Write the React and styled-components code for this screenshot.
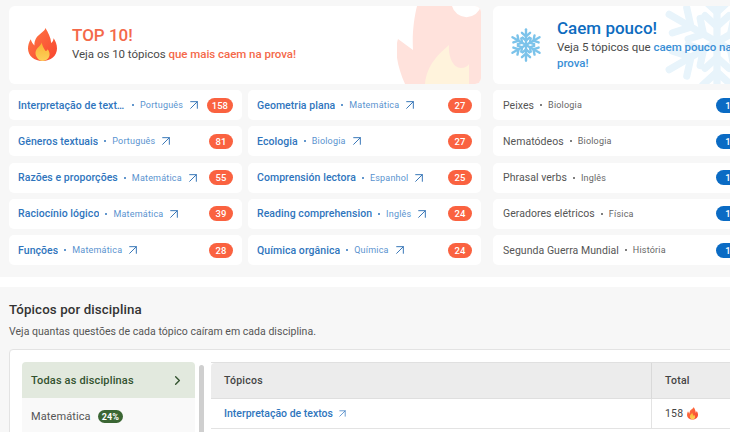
import React from "react";
import styled, { createGlobalStyle } from "styled-components";
import { ArrowUpRight, ChevronRight } from "lucide-react";

const Global = createGlobalStyle`
  html, body { margin: 0; padding: 0; background: #f7f7f7; }
  body { font-family: Roboto, "Liberation Sans", sans-serif; }
  * { box-sizing: border-box; }
`;

const Page = styled.div`
  width: 730px; height: 432px; overflow: hidden; background: #f7f7f7;
`;
const Highlights = styled.section`
  display: flex; gap: 12px; padding: 6px 0 0 9px; height: 277px; width: 790px;
`;
const Column = styled.div`
  flex: none; width: ${p => p.$w}px; display: flex; flex-direction: column;
`;
const Hero = styled.div`
  position: relative; height: 78px; background: #fff; border-radius: 6px; overflow: hidden;
  display: flex; align-items: center; gap: ${p => p.$gap}px; padding-left: ${p => p.$pad}px;
  margin-bottom: 6px; flex: none;
`;
const HeroText = styled.div`
  position: relative; display: flex; flex-direction: column; width: ${p => p.$w || "auto"};
  padding-bottom: ${p => p.$lift}px;
`;
const HeroTitle = styled.div`
  font-size: 17px; font-weight: 500; line-height: 21px; color: ${p => p.$c};
`;
const HeroSub = styled.div`
  font-size: 11.5px; line-height: 16px; color: #4a4a4a; letter-spacing: -.03px;
  em { font-style: normal; font-weight: 500; color: ${p => p.$c}; }
`;
const Watermark = styled.svg`
  position: absolute; right: ${p => p.$r}px; top: ${p => p.$t}px;
`;
const Rows = styled.div`
  display: grid; grid-template-columns: ${p => p.$cols}; column-gap: 6px; row-gap: 6.3px;
`;
const Row = styled.div`
  height: 30px; background: #fff; border-radius: 5px; display: flex; align-items: center;
  padding: 0 9px 0 ${p => p.$pad || 9}px;
`;
const Topic = styled.span`
  flex: none; font-size: 10.5px; letter-spacing: ${p => p.$muted ? ".05px" : ".06px"}; font-weight: ${p => p.$muted ? 400 : 500};
  color: ${p => p.$muted ? "#555" : "#2f75bd"}; white-space: nowrap; overflow: hidden; text-overflow: ellipsis;
  ${p => p.$w ? `width: ${p.$w}px;` : ""}
`;
const Dot = styled.span`
  width: 2px; height: 2px; border-radius: 50%; margin: 0 6px; flex: none;
  background: ${p => p.$muted ? "#555" : "#2f75bd"};
`;
const Subject = styled.span`
  font-size: 9px; letter-spacing: .2px; white-space: nowrap; color: ${p => p.$muted ? "#666" : "#5a93cf"};
`;
const RowArrow = styled(ArrowUpRight)`
  flex: none; margin-left: 3px; color: #3a78b8;
`;
const Badge = styled.span`
  margin-left: auto; flex: none; height: 15px; min-width: 24px; padding: 0 5px; border-radius: 8px;
  background: ${p => p.$c}; color: #fff; font-size: 9.5px; font-weight: 500;
  display: flex; align-items: center; justify-content: center;
`;
const Band = styled.div`
  height: 10px; background: #fff;
`;
const Disciplines = styled.section`
  padding: 14px 0 0 9px;
`;
const SectionTitle = styled.h2`
  margin: 0; font-size: 13.3px; font-weight: 500; line-height: 18px; color: #333; letter-spacing: .12px;
`;
const SectionSub = styled.p`
  margin: 6px 0 0; font-size: 10.5px; line-height: 14px; color: #555; letter-spacing: .03px;
`;
const Panel = styled.div`
  margin-top: 10px; width: 800px; height: 120px; background: #fff; border: 1px solid #e3e3e3;
  border-radius: 4px 0 0 0; padding: 12px; display: flex;
`;
const Sidebar = styled.div`
  width: 173px; flex: none; display: flex; flex-direction: column;
`;
const SideActive = styled.div`
  height: 36px; background: #e2e9de; border-radius: 4px 4px 0 0; display: flex; align-items: center;
  justify-content: space-between; padding: 0 10px 0 9px; font-size: 11px; font-weight: 500;
  color: #33532f; letter-spacing: .15px;
`;
const SideItem = styled.div`
  height: 36px; background: #f9f9f9; display: flex; align-items: center; gap: 7px; padding: 1px 0 0 9px;
  font-size: 11px; color: #555; letter-spacing: .1px;
`;
const Pct = styled.span`
  background: #3b6634; color: #fff; font-size: 9px; font-weight: 700; height: 13px; padding: 0 4px;
  border-radius: 7px; display: flex; align-items: center;
`;
const ScrollBar = styled.div`
  width: 5px; flex: none; margin: 3px 7px 0 4px; background: #cfcfcf; border-radius: 3px 3px 0 0;
`;
const TableBox = styled.div`
  width: 560px; flex: none; display: grid; grid-template-columns: 440px 120px; grid-auto-rows: min-content;
  border-top: 1px solid #e0e0e0;
`;
const Head = styled.div`
  height: 36px; background: #ececec; border-bottom: 1px solid #dfdfdf; display: flex; align-items: center;
  padding-left: ${p => p.$pad}px; font-size: 10.5px; font-weight: 500; color: #444; letter-spacing: .25px;
  border-left: ${p => p.$line ? "1px solid #d9d9d9" : "0"}; border-radius: ${p => p.$line ? 0 : "4px 0 0 0"};
`;
const Cell = styled.div`
  height: 30px; border-bottom: 1px solid #e3e3e3; display: flex; align-items: center; gap: ${p => p.$gap}px;
  padding-left: ${p => p.$pad}px; font-size: 10.5px; letter-spacing: ${p => p.$link ? "0" : ".2px"};
  color: ${p => p.$link ? "#2f75bd" : "#444"}; font-weight: ${p => p.$link ? 500 : 400};
  border-left: ${p => p.$line ? "1px solid #e3e3e3" : "0"};
`;

const Fire = ({ size }) => (
  <svg width={size} height={size * 1.14} viewBox="0 0 30 34" aria-hidden="true">
    <defs>
      <linearGradient id="fireOuter" x1="0" y1="0" x2="1" y2="1">
        <stop offset="0" stopColor="#ff7a45" />
        <stop offset="1" stopColor="#f8432e" />
      </linearGradient>
      <linearGradient id="fireInner" x1="0" y1="0" x2="0" y2="1">
        <stop offset="0" stopColor="#f9b233" />
        <stop offset="1" stopColor="#fdd05a" />
      </linearGradient>
    </defs>
    <path fill="url(#fireOuter)" d="M18 0C17 5 9 6 7 14 6.600 16 6.500 17 6.800 18 5 16.500 3.500 14 2.800 11.500 1 14.500 0 18 0 21c0 7.500 6.500 13 15 13s15-5.500 15-13c0-4-1.500-7.500-3.500-10.500-.3 2.500-1.200 4-2.500 5C23.500 9.500 21 5 18 0Z" />
    <path fill="url(#fireInner)" d="M14 15c-.2 3-4.500 5-6 9-1.300 4 2.500 10 7 10s8.500-4 7-9c-.4-1.300-1-2.200-1.800-3-.3 1.200-1 1.800-2 1.600C16.500 21.500 15 18.500 14 15Z" />
  </svg>
);

const SnowArms = ({ color, width }) => (
  <g stroke={color} strokeWidth={width} strokeLinecap="round" fill="none">
    {[0, 60, 120, 180, 240, 300].map(a => (
      <g key={a} transform={`rotate(${a} 50 50)`}>
        <path d="M50 50V4" />
        <path d="M38 14 50 25 62 14" />
        <path d="M40 28 50 37 60 28" />
      </g>
    ))}
  </g>
);

const hot = [
  ["Interpretação de textos", "Português", 158, 108],
  ["Geometria plana", "Matemática", 27],
  ["Gêneros textuais", "Português", 81],
  ["Ecologia", "Biologia", 27],
  ["Razões e proporções", "Matemática", 55],
  ["Comprensión lectora", "Espanhol", 25],
  ["Raciocínio lógico", "Matemática", 39],
  ["Reading comprehension", "Inglês", 24],
  ["Funções", "Matemática", 28],
  ["Química orgânica", "Química", 24],
];
const cold = [
  ["Peixes", "Biologia"],
  ["Nematódeos", "Biologia"],
  ["Phrasal verbs", "Inglês"],
  ["Geradores elétricos", "Física"],
  ["Segunda Guerra Mundial", "História"],
];

export default function App() {
  return (
    <Page>
      <Global />
      <Highlights>
        <Column $w={472}>
          <Hero $gap={15} $pad={19}>
            <Watermark $r={0} $t={0} width="84" height="78" viewBox="0 0 84 78">
              <path fill="#ffe2dc" d="M20 0H84V78H8C1 62-3 45 1 33L16 44C15 28 17 12 20 0Z" />
              <path fill="#fff" d="M55 0a15 15 0 0 0 29 0Z" />
              <path fill="#fff3dc" d="M28 78C30 58 42 48 52 39 51 50 56 62 64 62 68 62 71 60 72 58V78Z" />
            </Watermark>
            <Fire size={29} />
            <HeroText $lift={4}>
              <HeroTitle $c="#f4694a">TOP 10!</HeroTitle>
              <HeroSub $c="#f4694a">Veja os 10 tópicos <em>que mais caem na prova!</em></HeroSub>
            </HeroText>
          </Hero>
          <Rows $cols="233px 233px">
            {hot.map(([t, s, n, w]) => (
              <Row key={t}>
                <Topic $w={w}>{t}</Topic>
                <Dot />
                <Subject>{s}</Subject>
                <RowArrow size={16} strokeWidth={1.5} />
                <Badge $c="#fa6240">{n}</Badge>
              </Row>
            ))}
          </Rows>
        </Column>
        <Column $w={256}>
          <Hero $gap={14} $pad={16}>
            <Watermark $r={-28} $t={-24} width="120" height="120" viewBox="0 0 100 100">
              <SnowArms color="#e8f4fb" width={6} />
            </Watermark>
            <svg width="34" height="34" viewBox="0 0 100 100" aria-hidden="true">
              <SnowArms color="#7cc3ea" width={7} />
            </svg>
            <HeroText $w="185px" $lift={2}>
              <HeroTitle $c="#0e6cbf">Caem pouco!</HeroTitle>
              <HeroSub $c="#3a8fd6">Veja 5 tópicos que <em>caem pouco na prova!</em></HeroSub>
            </HeroText>
          </Hero>
          <Rows $cols="1fr">
            {cold.map(([t, s]) => (
              <Row key={t} $pad={10}>
                <Topic $muted>{t}</Topic>
                <Dot $muted />
                <Subject $muted>{s}</Subject>
                <Badge $c="#0a6bc4">1</Badge>
              </Row>
            ))}
          </Rows>
        </Column>
      </Highlights>
      <Band />
      <Disciplines>
        <SectionTitle>Tópicos por disciplina</SectionTitle>
        <SectionSub>Veja quantas questões de cada tópico caíram em cada disciplina.</SectionSub>
        <Panel>
          <Sidebar>
            <SideActive>Todas as disciplinas <ChevronRight size={15} strokeWidth={2.2} /></SideActive>
            <SideItem>Matemática <Pct>24%</Pct></SideItem>
          </Sidebar>
          <ScrollBar />
          <TableBox>
            <Head $pad={13}>Tópicos</Head>
            <Head $pad={13} $line>Total</Head>
            <Cell $pad={13} $gap={3} $link>Interpretação de textos <ArrowUpRight size={13} strokeWidth={1.3} /></Cell>
            <Cell $pad={13} $gap={4} $line>158 <Fire size={11} /></Cell>
          </TableBox>
        </Panel>
      </Disciplines>
    </Page>
  );
}
